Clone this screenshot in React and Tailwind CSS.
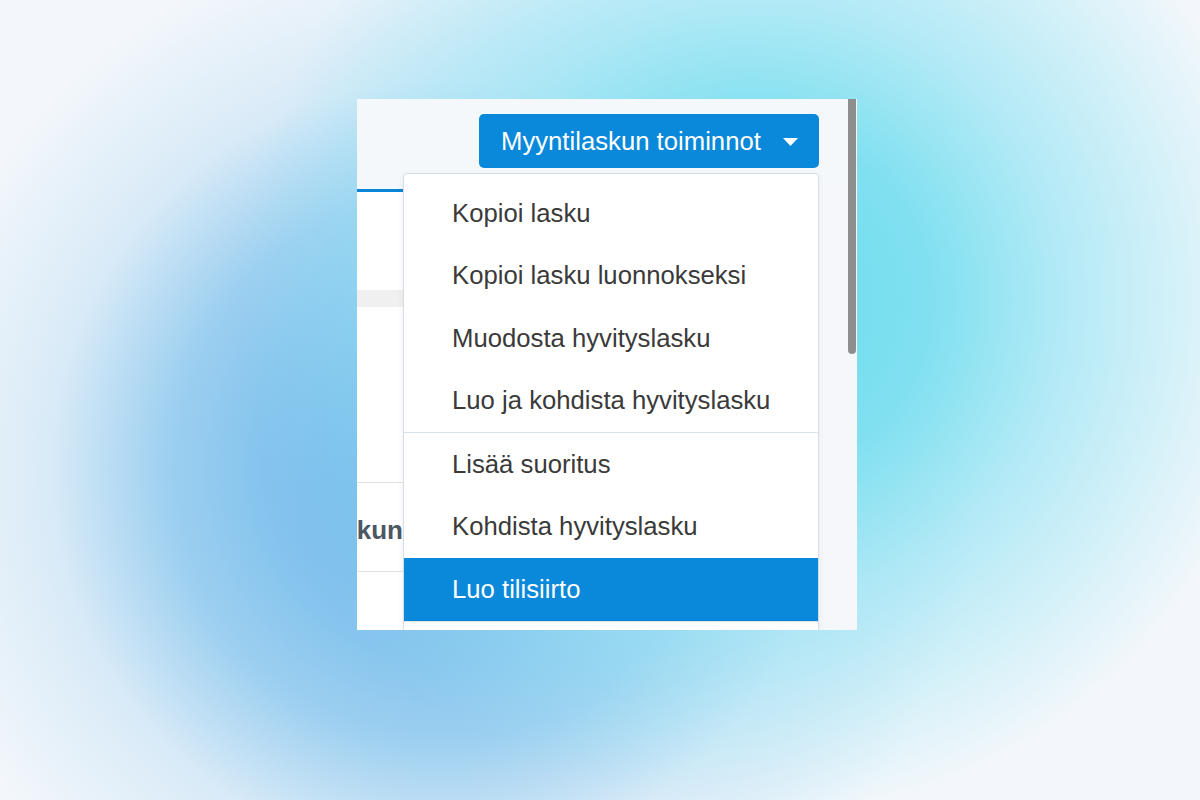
const ITEMS_TOP = [
  'Kopioi lasku',
  'Kopioi lasku luonnokseksi',
  'Muodosta hyvityslasku',
  'Luo ja kohdista hyvityslasku',
]

const ITEMS_BOTTOM = ['Lisää suoritus', 'Kohdista hyvityslasku', 'Luo tilisiirto']

function MenuItem({ label, active }) {
  return (
    <div
      className={
        active
          ? 'h-[62.5px] flex items-center pl-[48px] bg-[#0a88d9] text-white'
          : 'h-[62.5px] flex items-center pl-[48px] text-[#3a3a3a]'
      }
    >
      {label}
    </div>
  )
}

export default function App() {
  return (
    <div
      className="w-[1200px] h-[800px] flex items-start pt-[99px] pl-[357px] bg-[radial-gradient(circle_at_760px_300px,#6cdcef_0px,#80e0f0_170px,rgba(150,228,244,0.7)_300px,rgba(243,247,251,0)_520px),radial-gradient(circle_at_440px_470px,#66b0e8_0px,#88c5ee_190px,#9ccff0_270px,rgba(190,222,244,0.5)_390px,rgba(243,247,251,0)_540px)] bg-[#f3f7fb]"
      style={{ fontFamily: "'Liberation Sans', Arial, sans-serif" }}
    >
      <div className="relative w-[500px] h-[531px] overflow-hidden flex bg-[#f5f7fa]">
        {/* page */}
        <div className="flex-1 flex flex-col">
          {/* header */}
          <div className="h-[90px] flex justify-end items-start pt-[15px] pr-[29px] bg-[#f5f8fa]">
            <button className="h-[54px] w-[340px] flex items-center justify-between pl-[22px] pr-[21px] rounded-[5px] bg-[#0a88d9] text-white text-[25.7px]">
              <span>Myyntilaskun toiminnot</span>
              <svg width="15" height="8" viewBox="0 0 15 8" className="mt-[1px]">
                <path d="M0 0 L15 0 L7.5 8 Z" fill="#fff" />
              </svg>
            </button>
          </div>
          {/* tabs strip */}
          <div className="h-[3px] flex">
            <div className="w-[46px] bg-[#0a84d6]" />
          </div>
          {/* body */}
          <div className="flex-1 flex">
            <div className="w-[440px] bg-white flex flex-col">
              <div className="h-[98px]" />
              <div className="h-[17px] bg-[#f0f0f0]" />
              <div className="h-[175px]" />
              <div className="h-[90px] pt-[6px] border-t border-b border-[#e1e1e1] flex items-center">
                <div className="w-[46px] overflow-hidden flex justify-end">
                  <span className="text-[26px] font-bold text-[#4b5763] whitespace-nowrap">Myyntilaskun</span>
                </div>
              </div>
            </div>
          </div>
        </div>

        {/* scrollbar */}
        <div className="w-[9px] bg-[#f5f7fa] flex flex-col">
          <div className="h-[255px] w-[8px] bg-[#8e8e8e] rounded-b-[4px]" />
        </div>

        {/* dropdown */}
        <div className="absolute left-[46px] top-[74px] w-[416px] h-[480px] bg-white border border-[#d6dde4] rounded-[4px] shadow-[0_2px_6px_rgba(0,0,0,0.06)] text-[25.7px]">
          <div className="pt-[8px]">
            {ITEMS_TOP.map((t) => (
              <MenuItem key={t} label={t} />
            ))}
          </div>
          <div className="h-px bg-[#dbe3ea]" />
          {ITEMS_BOTTOM.map((t) => (
            <MenuItem key={t} label={t} active={t === 'Luo tilisiirto'} />
          ))}
          <div className="h-px bg-[#dbe3ea]" />
        </div>
      </div>
    </div>
  )
}
